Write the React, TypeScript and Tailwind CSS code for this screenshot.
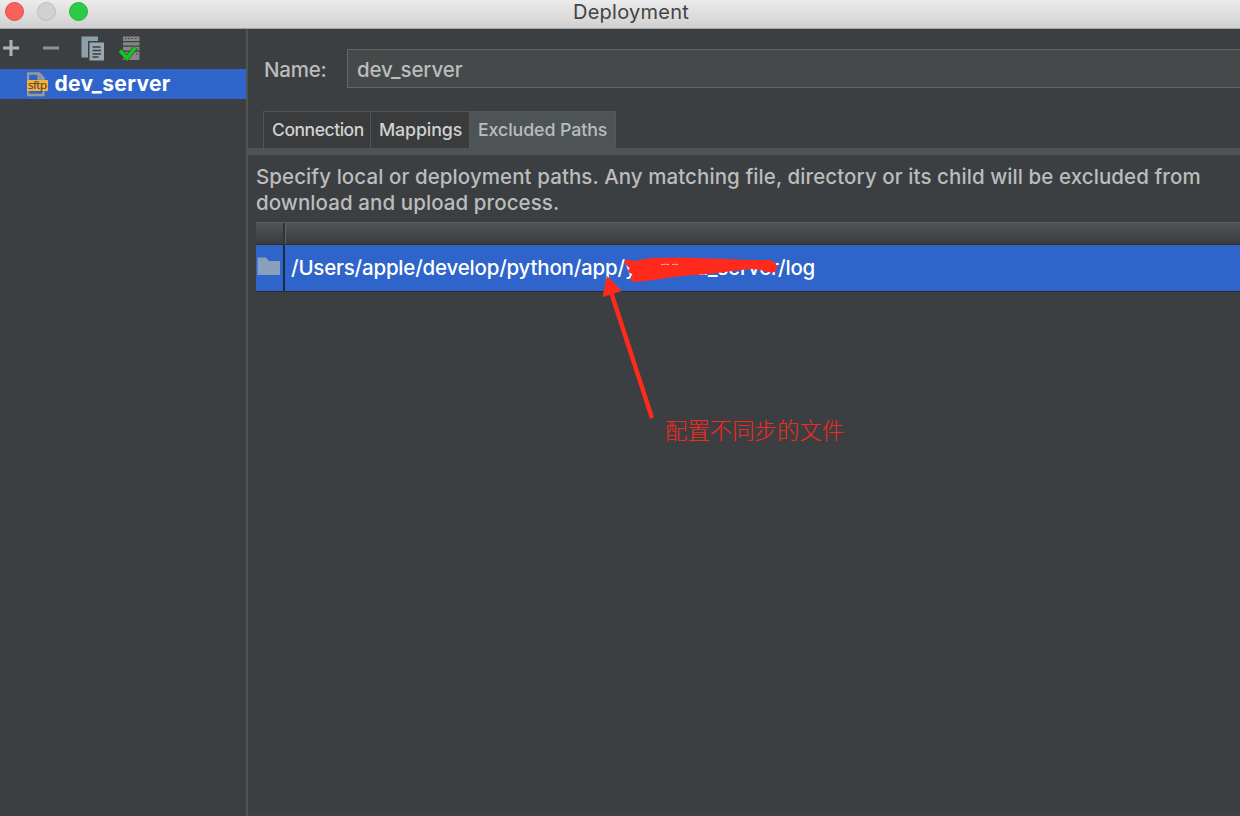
const Sep = () => <div className="w-px shrink-0 bg-[#525556]" />;

function AddIcon() {
  return (
    <svg width="18" height="18" viewBox="0 0 18 18" className="shrink-0">
      <path d="M1 8H17M9 0V16" stroke="#b0b2b3" strokeWidth="3" />
    </svg>
  );
}

function RemoveIcon() {
  return (
    <svg width="18" height="18" viewBox="0 0 18 18" className="shrink-0">
      <path d="M1 8H17" stroke="#8f9193" strokeWidth="3" />
    </svg>
  );
}

function CopyIcon() {
  return (
    <svg width="24" height="26" viewBox="0 0 24 26" className="shrink-0">
      <path d="M0.5 0.5H17V5H7V21.5H0.5Z" fill="#8f9fa9" />
      <path d="M8.5 6.5H23V24.5H8.5Z" fill="#9aa7b0" />
      <path d="M11.5 11H19.5M11.5 14.5H20M11.5 18H20M11.5 21H17.5" stroke="#3c3f41" strokeWidth="1.6" />
    </svg>
  );
}

function ServerIcon() {
  return (
    <svg width="22" height="26" viewBox="0 0 22 26" className="shrink-0">
      <path d="M4 0.500H20.500V5H4ZM4 6.200H20.500V9.500H4ZM4 10.700H20.500V14.500H4ZM4 15.700H20.500V24H4Z" fill="#858688" />
      <path d="M6 2.500H7.500M9 2.500H10.500M12 2.500H13.500M16 2.500H17.500M17 13H18.500M17 18H18.500" stroke="#3c3f41" strokeWidth="1.2" />
      <path d="M1 14.500L8 22L16.500 11.500" fill="none" stroke="#3c3f41" strokeWidth="5" />
      <path d="M1 14.500L8 22L16.500 11.500" fill="none" stroke="#14c51d" strokeWidth="3.8" />
    </svg>
  );
}

function SftpIcon() {
  return (
    <svg width="22" height="25" viewBox="0 0 22 25" className="shrink-0">
      <path d="M1 8V1.500H12L16.500 6V8M11.500 2V6.500H16M1 19V23H16.500V19" fill="none" stroke="#9b9a96" strokeWidth="2.3" />
      <rect y="8" width="21" height="11" fill="#f4af3d" />
      <text x="10.5" y="17" textAnchor="middle" textLength="19" fontSize="11.5" fontFamily="Open Sans, sans-serif" fill="#564532" stroke="#564532" strokeWidth="0.2">sftp</text>
    </svg>
  );
}

function Annotation() {
  return (
    <>
      <svg className="pointer-events-none absolute left-[590px] top-[250px]" width="200" height="175" viewBox="590 250 200 175">
        <path d="M627 259.500C636 263 641 258.500 655 258C690 256.500 735 260 769 260C776 261 779 267 775 272C769 274 762 269 752 269C736 270 715 274 695 275C673 276.500 651 281 634 282C629 280 630 275 634 274C629 274 626 271 630 268C624 265 623 260 627 259.500Z" fill="#ff291c" />
        <path d="M661 264.500Q666 264 669 264.500M672 264.500Q675 264 678 264.500" fill="none" stroke="#fff" strokeOpacity=".6" strokeWidth="1" />
        <path d="M611 292L652 418" stroke="#ff291c" strokeWidth="4.4" />
        <path d="M607 276L622 291L602.500 297Z" fill="#ff291c" />
      </svg>
      <div className="absolute left-[665px] top-[413px] whitespace-nowrap font-['Noto_Sans_CJK_SC',sans-serif] text-[22.4px] font-light leading-8 text-[#f42a1d]">
        配置不同步的文件
      </div>
    </>
  );
}

export default function App() {
  return (
    <div className="relative flex h-[816px] w-[1240px] flex-col overflow-hidden bg-[#3c3f41] font-['Inter',sans-serif] text-[#bbbcbd]">
      <header className="relative flex h-[29px] shrink-0 justify-center border-b border-[#a1a2a2] bg-linear-to-b from-[#ebebeb] to-[#d1d1d1]">
        <div className="absolute left-[5px] top-[2px] flex gap-[13px]">
          <span className="size-[19px] rounded-full border border-[#df5048] bg-[#fc605b]" />
          <span className="size-[19px] rounded-full border border-[#bcbcbc] bg-[#d1d1d1]" />
          <span className="size-[19px] rounded-full border border-[#24b33c] bg-[#2bcb46]" />
        </div>
        <span className="mt-px pl-[22px] text-[20px] leading-[23px] tracking-[0.25px] text-[#434343]">Deployment</span>
      </header>
      <div className="flex min-h-0 flex-1">
        <aside className="w-[246px] shrink-0">
          <div className="flex h-10 items-center pl-[2px]">
            <AddIcon />
            <div className="ml-[22px] flex"><RemoveIcon /></div>
            <div className="ml-[21px] flex"><CopyIcon /></div>
            <div className="ml-[14px] flex"><ServerIcon /></div>
          </div>
          <div className="flex h-[30px] items-center bg-[#2f65ca] pl-[27px]">
            <SftpIcon />
            <span className="ml-[5.5px] text-[21px] font-bold leading-[30px] tracking-[0.35px] text-white">dev_server</span>
          </div>
        </aside>
        <div className="w-[2px] shrink-0 bg-[#515253]" />
        <main className="flex min-w-0 flex-1 flex-col">
          <div className="mt-5 flex h-[39px] shrink-0 items-center pl-4">
            <span className="w-[83px] pt-[3px] text-[20.5px] font-[450] tracking-[-0.2px]">Name:</span>
            <div className="flex h-[39px] flex-1 items-center border border-r-0 border-[#646464] bg-[#45494a] pl-[9px] pt-[3px] text-[20.5px] font-[450] tracking-[-0.12px]">dev_server</div>
          </div>
          <div className="mt-[23px] flex h-[37px] shrink-0 pl-[15px] text-[17.8px]">
            <Sep />
            <div className="flex w-[106px] items-center border-t border-[#525556] bg-[#393b3c] pl-[8px] text-[17.5px] font-[450] tracking-[-0.45px] text-[#d0d1d1]">Connection</div>
            <Sep />
            <div className="flex w-[98px] items-center border-t border-[#525556] bg-[#393b3c] pl-[8px] font-[450] tracking-[-0.12px] text-[#d0d1d1]">Mappings</div>
            <div className="flex w-[147px] items-center border border-b-0 border-[#555657] bg-[#4e5456] pl-[8px] font-[450] tracking-[-0.1px]">Excluded Paths</div>
          </div>
          <div className="h-[7px] shrink-0 border-y border-[#56504e] bg-[#4e5456]" />
          <p className="mt-[9px] h-[58px] shrink-0 whitespace-nowrap pl-2 text-[20.5px] font-[450] leading-[26px] tracking-[0.08px]">
            <span className="block">Specify local or deployment paths. Any matching file, directory or its child will be excluded from</span>
            <span className="block">download and upload process.</span>
          </p>
          <div className="ml-2 flex h-[22px] shrink-0 border-t border-[#5a5d5e] bg-linear-to-b from-[#505557] to-[#393b3d]">
            <div className="w-[29px] border-r-2 border-[#303233]" />
            <div className="w-px bg-[#606365]" />
          </div>
          <div className="ml-2 flex h-12 shrink-0 border-b border-t border-[#2b2c2e] bg-[#2f65ca]">
            <div className="flex w-[29px] shrink-0 border-r-2 border-[#1e2a40] pl-px pt-3">
              <svg width="24" height="20" viewBox="0 0 24 20"><path d="M0.500 0.500H9L12 4H23V18H0.500Z" fill="#8a9fba" /></svg>
            </div>
            <div className="flex items-center whitespace-nowrap pl-[6px] text-[20.5px] font-medium tracking-[-0.2px] text-white">
              <span>/Users/apple/develop/python/app/y</span>
              <span className="w-[60px]" />
              <span>a_server/log</span>
            </div>
          </div>
          <div className="flex-1 border-b-2 border-[#404040]" />
        </main>
      </div>
      <Annotation />
    </div>
  );
}
